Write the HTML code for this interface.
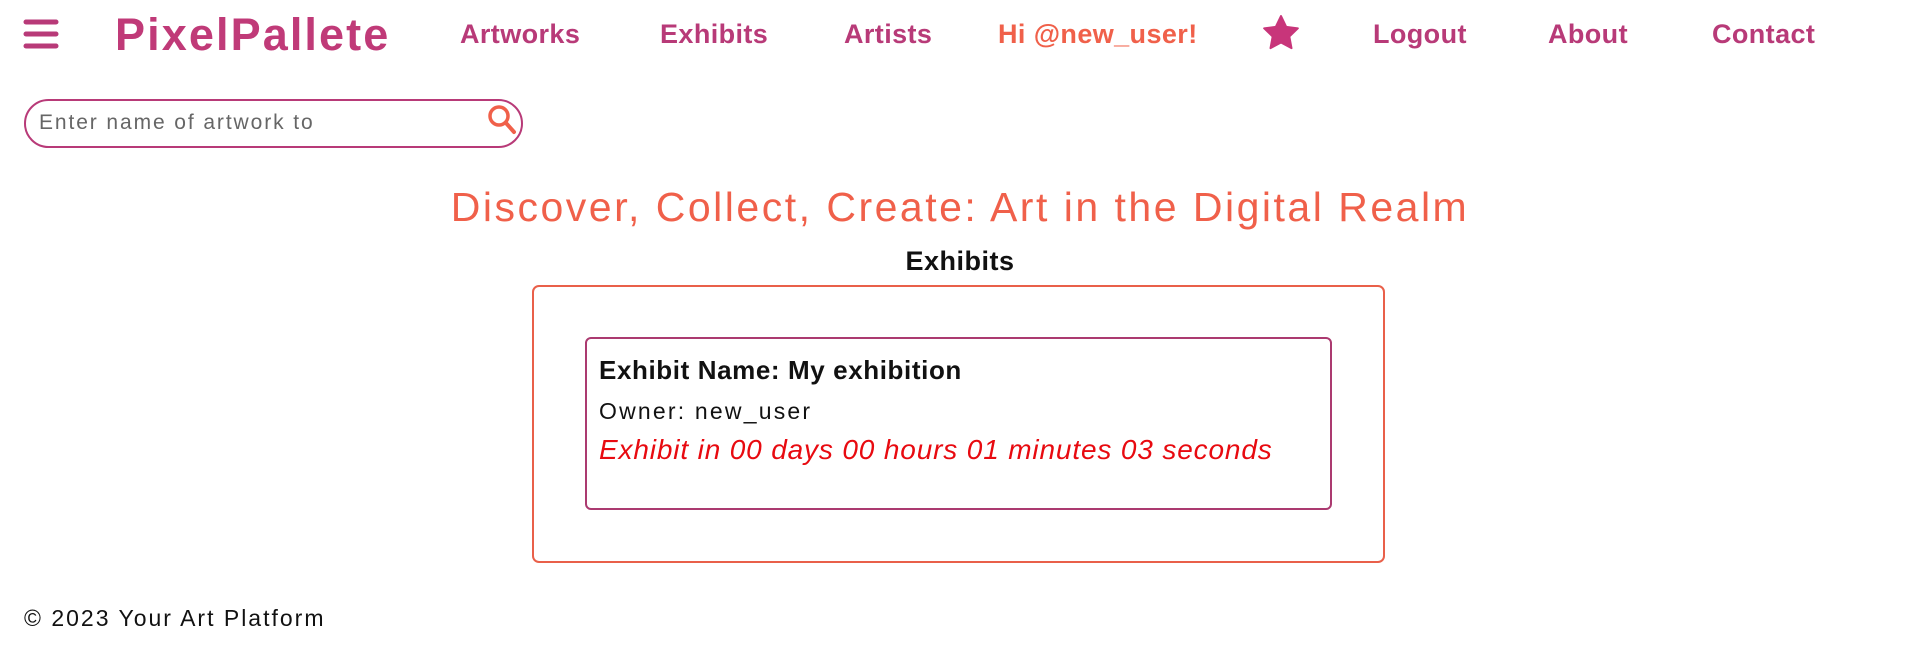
<!DOCTYPE html>
<html><head><meta charset="utf-8"><style>
*{margin:0;padding:0;box-sizing:border-box}
body{width:1920px;height:672px;background:#fff;font-family:"Liberation Sans",sans-serif;position:relative;overflow:hidden}
.a{position:absolute;white-space:nowrap}
.nav{color:#b83a78;font-size:27px;top:19px;font-weight:bold;letter-spacing:0.4px}
</style></head><body>
<svg class="a" style="left:23px;top:18px" width="36" height="32" viewBox="0 0 36 32"><g stroke="#b83a78" stroke-width="5" stroke-linecap="round"><line x1="3" y1="4" x2="33" y2="4"/><line x1="3" y1="16" x2="33" y2="16"/><line x1="3" y1="28" x2="33" y2="28"/></g></svg>
<div class="a" style="left:115px;top:9px;font-size:45px;color:#c03a78;font-weight:bold;letter-spacing:2.1px">PixelPallete</div>
<div class="a nav" style="left:460px">Artworks</div>
<div class="a nav" style="left:660px">Exhibits</div>
<div class="a nav" style="left:844px">Artists</div>
<div class="a nav" style="left:998px;color:#f0604a">Hi @new_user!</div>
<svg class="a" style="left:1261px;top:13px" width="40" height="40" viewBox="0 0 24 24"><path d="M12 1.8l3.1 6.5 7 .9-5.1 4.9 1.3 7-6.3-3.4-6.3 3.4 1.3-7L1.9 9.2l7-.9z" fill="#c8357a" stroke="#c8357a" stroke-width="1.2" stroke-linejoin="round"/></svg>
<div class="a nav" style="left:1373px">Logout</div>
<div class="a nav" style="left:1548px">About</div>
<div class="a nav" style="left:1712px">Contact</div>
<div class="a" style="left:24px;top:99px;width:499px;height:49px;border:2px solid #b83a78;border-radius:25px"></div>
<div class="a" style="left:39px;top:111px;font-size:21px;color:#666;letter-spacing:1.9px">Enter name of artwork to</div>
<svg class="a" style="left:487px;top:104px" width="30" height="32" viewBox="0 0 30 32"><circle cx="12" cy="12" r="9" fill="none" stroke="#f0604a" stroke-width="3.5"/><line x1="19" y1="19" x2="27" y2="28" stroke="#f0604a" stroke-width="4" stroke-linecap="round"/></svg>
<div class="a" style="left:0;width:1920px;text-align:center;top:184px;font-size:41px;color:#f0604a;letter-spacing:2.5px">Discover, Collect, Create: Art in the Digital Realm</div>
<div class="a" style="left:0;width:1920px;text-align:center;top:246px;font-size:27px;color:#111;font-weight:bold;letter-spacing:0.5px">Exhibits</div>
<div class="a" style="left:532px;top:285px;width:853px;height:278px;border:2px solid #e9604a;border-radius:7px"></div>
<div class="a" style="left:585px;top:337px;width:747px;height:173px;border:2px solid #ab3a70;border-radius:6px"></div>
<div class="a" style="left:599px;top:355px;font-size:26px;color:#111;font-weight:bold;letter-spacing:0.6px">Exhibit Name: My exhibition</div>
<div class="a" style="left:599px;top:398px;font-size:23px;color:#111;letter-spacing:2.2px">Owner: new_user</div>
<div class="a" style="left:599px;top:434px;font-size:28px;color:#e80a10;font-style:italic;letter-spacing:0.85px">Exhibit in 00 days 00 hours 01 minutes 03 seconds</div>
<div class="a" style="left:24px;top:605px;font-size:23px;color:#111;letter-spacing:2px">© 2023 Your Art Platform</div>
</body></html>
